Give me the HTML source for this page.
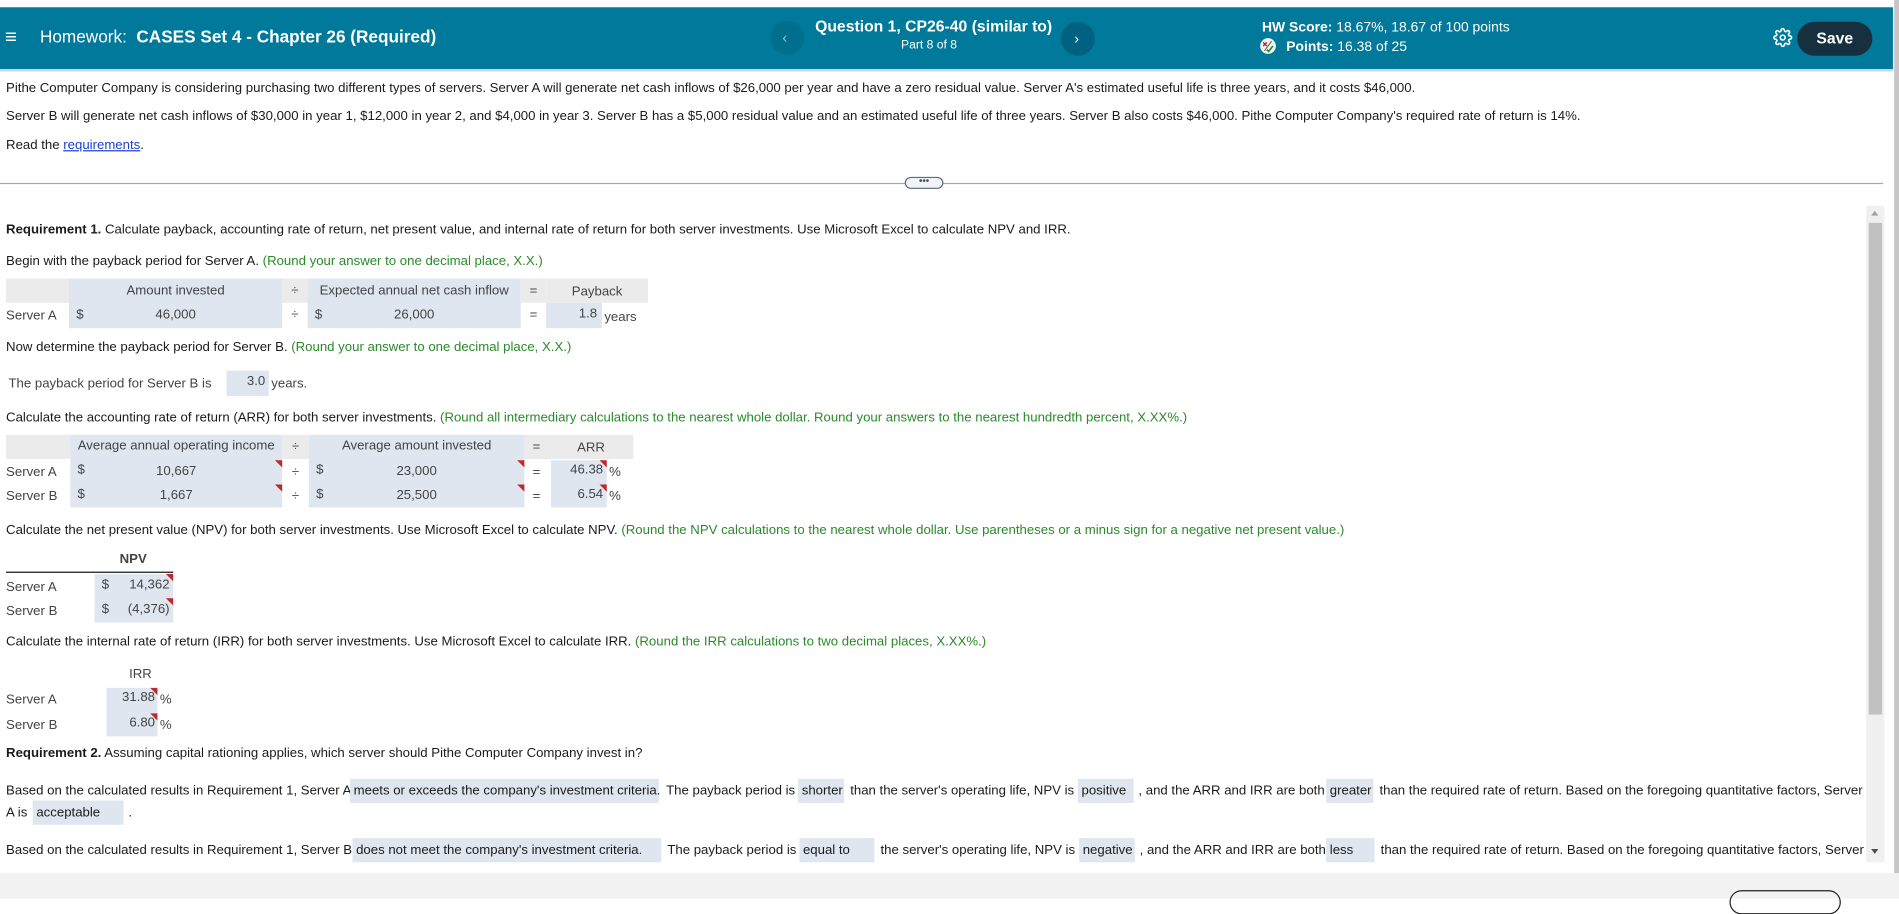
<!DOCTYPE html>
<html><head><meta charset="utf-8"><style>
html,body{margin:0;padding:0;width:1899px;height:898px;overflow:hidden;background:#fff;}
#w{position:absolute;left:0;top:0;width:1568px;height:742px;transform:scale(1.2111);transform-origin:0 0;font-family:"Liberation Sans",Arial,sans-serif;font-size:10.9px;color:#1b1b1b;}
.t{position:absolute;white-space:nowrap;line-height:16px;}
.g{color:#2a8a2a;}
.b{position:absolute;background:#dfe6f0;}
.h{position:absolute;background:#ebebeb;}
.c{position:absolute;text-align:center;line-height:20px;color:#444;white-space:nowrap;}
.r{position:absolute;text-align:right;line-height:20px;color:#444;white-space:nowrap;}
.tri{position:absolute;width:0;height:0;border-top:6px solid #c0282d;border-left:6px solid transparent;}
.dd{position:absolute;background:#dfe6f0;height:20px;line-height:20px;padding-left:3px;white-space:nowrap;box-sizing:border-box;}
</style></head><body><div id="w">
<div style="position:absolute;left:0;top:6px;width:1563px;height:51px;background:#00799b;"></div>
<div style="position:absolute;left:0;top:57px;width:1563px;height:2px;background:#cdd6e6;"></div>
<div class="t" style="left:4px;top:23px;color:#fff;font-size:17px;">&#8801;</div>
<div class="t" style="left:33px;top:23px;color:#fff;font-size:14.2px;">Homework:&nbsp; <b>CASES Set 4 - Chapter 26 (Required)</b></div>
<div style="position:absolute;left:636px;top:17px;width:28px;height:28px;border-radius:50%;background:#006e8d;"></div>
<div class="t" style="left:646px;top:23px;color:#9fc4d2;font-size:12px;">&#8249;</div>
<div class="t" style="left:673px;top:14px;color:#fff;font-size:13px;font-weight:bold;">Question 1, CP26-40 (similar to)</div>
<div class="t" style="left:744px;top:30px;color:#fff;font-size:10px;">Part 8 of 8</div>
<div style="position:absolute;left:876px;top:18px;width:28px;height:28px;border-radius:50%;background:#006180;"></div>
<div class="t" style="left:887px;top:24px;color:#fff;font-size:12px;">&#8250;</div>
<div class="t" style="left:1042px;top:15px;color:#fff;font-size:11.5px;"><b>HW Score:</b> 18.67%, 18.67 of 100 points</div>
<svg style="position:absolute;left:1040px;top:31px" width="14" height="14" viewBox="0 0 14 14"><circle cx="7" cy="7" r="6.5" fill="#f3f3f3"/><path d="M3 4l3 3M6 4L3 7" stroke="#c0282d" stroke-width="1.2"/><path d="M6 10l1.5 1.5L11 7" stroke="#2a8a2a" stroke-width="1.4" fill="none"/><path d="M4 11L10 3" stroke="#555" stroke-width="0.8"/></svg>
<div class="t" style="left:1062px;top:31px;color:#fff;font-size:11.5px;"><b>Points:</b> 16.38 of 25</div>
<svg style="position:absolute;left:1464px;top:23px" width="16" height="16" viewBox="0 0 24 24" fill="none" stroke="#fff" stroke-width="2"><circle cx="12" cy="12" r="3"/><path d="M19.4 15a1.7 1.7 0 0 0 .3 1.8l.1.1a2 2 0 1 1-2.8 2.8l-.1-.1a1.7 1.7 0 0 0-1.8-.3 1.7 1.7 0 0 0-1 1.5V21a2 2 0 1 1-4 0v-.1a1.7 1.7 0 0 0-1.1-1.5 1.7 1.7 0 0 0-1.8.3l-.1.1a2 2 0 1 1-2.8-2.8l.1-.1a1.7 1.7 0 0 0 .3-1.800 1.7 1.7 0 0 0-1.5-1H3a2 2 0 1 1 0-4h.1a1.7 1.7 0 0 0 1.5-1.1 1.7 1.7 0 0 0-.3-1.8l-.1-.1a2 2 0 1 1 2.8-2.8l.1.1a1.7 1.7 0 0 0 1.8.3H9a1.7 1.7 0 0 0 1-1.5V3a2 2 0 1 1 4 0v.1a1.7 1.7 0 0 0 1 1.5 1.7 1.7 0 0 0 1.8-.3l.1-.1a2 2 0 1 1 2.8 2.8l-.1.1a1.7 1.7 0 0 0-.3 1.8V9a1.7 1.7 0 0 0 1.5 1H21a2 2 0 1 1 0 4h-.1a1.7 1.7 0 0 0-1.5 1z"/></svg>
<div style="position:absolute;left:1484px;top:18px;width:62px;height:28px;border-radius:14px;background:#17303f;color:#fff;font-weight:bold;font-size:13px;line-height:28px;text-align:center;">Save</div>
<div style="position:absolute;left:1564px;top:0;width:4px;height:721px;background:#c6c6c6;"></div>
<div class="t" style="left:5px;top:65px;">Pithe Computer Company is considering purchasing two different types of servers. Server A will generate net cash inflows of $26,000 per year and have a zero residual value. Server A's estimated useful life is three years, and it costs $46,000.</div>
<div class="t" style="left:5px;top:88px;">Server B will generate net cash inflows of $30,000 in year 1, $12,000 in year 2, and $4,000 in year 3. Server B has a $5,000 residual value and an estimated useful life of three years. Server B also costs $46,000. Pithe Computer Company's required rate of return is 14%.</div>
<div class="t" style="left:5px;top:112px;">Read the <span style="color:#1a3fd1;text-decoration:underline;">requirements</span>.</div>
<div style="position:absolute;left:0;top:151px;width:1555px;height:1px;background:#b8a0aa;"></div>
<div style="position:absolute;left:747px;top:146px;width:32px;height:10px;border:1px solid #5b6b7b;border-radius:6px;background:#f1f3f6;box-sizing:border-box;font-size:8px;line-height:6px;text-align:center;color:#4a5a6a;font-weight:bold;">&bull;&bull;&bull;</div>
<div style="position:absolute;left:1541px;top:170px;width:15px;height:542px;background:#f0f0f0;"></div>
<div style="position:absolute;left:1543px;top:184px;width:11px;height:406px;background:#c1c1c1;"></div>
<div style="position:absolute;left:1545px;top:174px;width:0;height:0;border-left:3.5px solid transparent;border-right:3.5px solid transparent;border-bottom:4px solid #a3a3a3;"></div>
<div style="position:absolute;left:1545px;top:701px;width:0;height:0;border-left:3.5px solid transparent;border-right:3.5px solid transparent;border-top:4px solid #505050;"></div>
<div class="t" style="left:5px;top:182px;"><b>Requirement 1.</b> Calculate payback, accounting rate of return, net present value, and internal rate of return for both server investments. Use Microsoft Excel to calculate NPV and IRR.</div>
<div class="t" style="left:5px;top:208px;">Begin with the payback period for Server A. <span class="g">(Round your answer to one decimal place, X.X.)</span></div>
<div class="h" style="left:5px;top:230px;width:52px;height:20px;"></div>
<div class="b" style="left:57px;top:230px;width:176px;height:41px;"></div>
<div class="h" style="left:233px;top:230px;width:21px;height:20px;"></div>
<div class="b" style="left:254px;top:230px;width:176px;height:41px;"></div>
<div class="h" style="left:430px;top:230px;width:21px;height:20px;"></div>
<div class="h" style="left:451px;top:230px;width:84px;height:20px;"></div>
<div class="b" style="left:451px;top:250px;width:46px;height:21px;"></div>
<div class="c" style="left:57px;top:230px;width:176px;">Amount invested</div>
<div class="c" style="left:233px;top:230px;width:21px;">÷</div>
<div class="c" style="left:254px;top:230px;width:176px;">Expected annual net cash inflow</div>
<div class="c" style="left:430px;top:230px;width:21px;">=</div>
<div class="c" style="left:451px;top:231px;width:84px;">Payback</div>
<div class="c" style="left:5px;top:251px;">Server A</div>
<div class="c" style="left:63px;top:250px;">$</div>
<div class="c" style="left:57px;top:250px;width:176px;">46,000</div>
<div class="c" style="left:233px;top:250px;width:21px;">÷</div>
<div class="c" style="left:260px;top:250px;">$</div>
<div class="c" style="left:254px;top:250px;width:176px;">26,000</div>
<div class="c" style="left:430px;top:250px;width:21px;">=</div>
<div class="r" style="left:451px;top:249px;width:42px;">1.8</div>
<div class="c" style="left:499px;top:252px;">years</div>
<div class="t" style="left:5px;top:279px;">Now determine the payback period for Server B. <span class="g">(Round your answer to one decimal place, X.X.)</span></div>
<div class="c" style="left:7px;top:307px;">The payback period for Server B is</div>
<div class="b" style="left:187px;top:306px;width:35px;height:21px;"></div>
<div class="r" style="left:187px;top:305px;width:32px;">3.0</div>
<div class="c" style="left:224px;top:307px;">years.</div>
<div class="t" style="left:5px;top:337px;">Calculate the accounting rate of return (ARR) for both server investments. <span class="g">(Round all intermediary calculations to the nearest whole dollar. Round your answers to the nearest hundredth percent, X.XX%.)</span></div>
<div class="h" style="left:5px;top:359px;width:53px;height:20px;"></div>
<div class="b" style="left:58px;top:359px;width:175px;height:60px;"></div>
<div class="h" style="left:233px;top:359px;width:22px;height:20px;"></div>
<div class="b" style="left:255px;top:359px;width:178px;height:60px;"></div>
<div class="h" style="left:433px;top:359px;width:20px;height:20px;"></div>
<div class="h" style="left:453px;top:359px;width:70px;height:20px;"></div>
<div class="b" style="left:455px;top:380px;width:46px;height:39px;"></div>
<div class="c" style="left:58px;top:358px;width:175px;">Average annual operating income</div>
<div class="c" style="left:233px;top:359px;width:22px;">÷</div>
<div class="c" style="left:255px;top:358px;width:178px;">Average amount invested</div>
<div class="c" style="left:433px;top:359px;width:20px;">=</div>
<div class="c" style="left:453px;top:360px;width:70px;">ARR</div>
<div class="c" style="left:5px;top:380px;">Server A</div>
<div class="c" style="left:5px;top:400px;">Server B</div>
<div class="c" style="left:64px;top:378px;">$</div><div class="c" style="left:64px;top:398px;">$</div>
<div class="c" style="left:58px;top:379px;width:175px;">10,667</div>
<div class="c" style="left:58px;top:399px;width:175px;">1,667</div>
<div class="tri" style="left:227px;top:380px;"></div><div class="tri" style="left:227px;top:400px;"></div>
<div class="c" style="left:233px;top:380px;width:22px;">÷</div><div class="c" style="left:233px;top:400px;width:22px;">÷</div>
<div class="c" style="left:261px;top:378px;">$</div><div class="c" style="left:261px;top:398px;">$</div>
<div class="c" style="left:255px;top:379px;width:178px;">23,000</div>
<div class="c" style="left:255px;top:399px;width:178px;">25,500</div>
<div class="tri" style="left:427px;top:380px;"></div><div class="tri" style="left:427px;top:400px;"></div>
<div class="c" style="left:433px;top:380px;width:20px;">=</div><div class="c" style="left:433px;top:400px;width:20px;">=</div>
<div class="r" style="left:455px;top:378px;width:43px;">46.38</div>
<div class="r" style="left:455px;top:398px;width:43px;">6.54</div>
<div class="tri" style="left:495px;top:380px;"></div><div class="tri" style="left:495px;top:400px;"></div>
<div class="c" style="left:503px;top:380px;">%</div><div class="c" style="left:503px;top:400px;">%</div>
<div class="t" style="left:5px;top:430px;">Calculate the net present value (NPV) for both server investments. Use Microsoft Excel to calculate NPV. <span class="g">(Round the NPV calculations to the nearest whole dollar. Use parentheses or a minus sign for a negative net present value.)</span></div>
<div class="c" style="left:80px;top:452px;width:60px;font-weight:bold;">NPV</div>
<div style="position:absolute;left:5px;top:472px;width:138px;height:1px;background:#111;"></div>
<div class="b" style="left:78px;top:474px;width:65px;height:40px;"></div>
<div class="c" style="left:5px;top:475px;">Server A</div>
<div class="c" style="left:5px;top:495px;">Server B</div>
<div class="c" style="left:84px;top:473px;">$</div><div class="c" style="left:84px;top:493px;">$</div>
<div class="r" style="left:84px;top:473px;width:56px;">14,362</div>
<div class="r" style="left:84px;top:493px;width:56px;">(4,376)</div>
<div class="tri" style="left:137px;top:474px;"></div><div class="tri" style="left:137px;top:494px;"></div>
<div class="t" style="left:5px;top:522px;">Calculate the internal rate of return (IRR) for both server investments. Use Microsoft Excel to calculate IRR. <span class="g">(Round the IRR calculations to two decimal places, X.XX%.)</span></div>
<div class="c" style="left:96px;top:547px;width:40px;">IRR</div>
<div class="b" style="left:88px;top:568px;width:42px;height:40px;"></div>
<div class="c" style="left:5px;top:568px;">Server A</div>
<div class="c" style="left:5px;top:589px;">Server B</div>
<div class="r" style="left:88px;top:566px;width:40px;">31.88</div>
<div class="r" style="left:88px;top:587px;width:40px;">6.80</div>
<div class="tri" style="left:124px;top:568px;"></div><div class="tri" style="left:124px;top:589px;"></div>
<div class="c" style="left:132px;top:568px;">%</div><div class="c" style="left:132px;top:589px;">%</div>
<div class="t" style="left:5px;top:614px;"><b>Requirement 2.</b> Assuming capital rationing applies, which server should Pithe Computer Company invest in?</div>
<div class="t" style="left:5px;top:645px;">Based on the calculated results in Requirement 1, Server A</div>
<div class="dd" style="left:289px;top:643px;width:255px;">meets or exceeds the company's investment criteria.</div>
<div class="t" style="left:550px;top:645px;">The payback period is</div>
<div class="dd" style="left:659px;top:643px;width:38px;">shorter</div>
<div class="t" style="left:702px;top:645px;">than the server's operating life, NPV is</div>
<div class="dd" style="left:890px;top:643px;width:46px;">positive</div>
<div class="t" style="left:940px;top:645px;">, and the ARR and IRR are both</div>
<div class="dd" style="left:1095px;top:643px;width:39px;">greater</div>
<div class="t" style="left:1139px;top:645px;">than the required rate of return. Based on the foregoing quantitative factors, Server</div>
<div class="t" style="left:5px;top:663px;">A is</div>
<div class="dd" style="left:27px;top:661px;width:75px;">acceptable</div>
<div class="t" style="left:106px;top:663px;">.</div>
<div class="t" style="left:5px;top:694px;">Based on the calculated results in Requirement 1, Server B</div>
<div class="dd" style="left:291px;top:692px;width:255px;">does not meet the company's investment criteria.</div>
<div class="t" style="left:551px;top:694px;">The payback period is</div>
<div class="dd" style="left:660px;top:692px;width:62px;">equal to</div>
<div class="t" style="left:727px;top:694px;">the server's operating life, NPV is</div>
<div class="dd" style="left:891px;top:692px;width:46px;">negative</div>
<div class="t" style="left:941px;top:694px;">, and the ARR and IRR are both</div>
<div class="dd" style="left:1095px;top:692px;width:40px;">less</div>
<div class="t" style="left:1140px;top:694px;">than the required rate of return. Based on the foregoing quantitative factors, Server</div>
<div style="position:absolute;left:0;top:721px;width:1568px;height:21px;background:#f2f2f2;"></div>
<div style="position:absolute;left:1428px;top:735px;width:92px;height:20px;border:1.5px solid #222;border-radius:12px;box-sizing:border-box;"></div>
</div></body></html>
